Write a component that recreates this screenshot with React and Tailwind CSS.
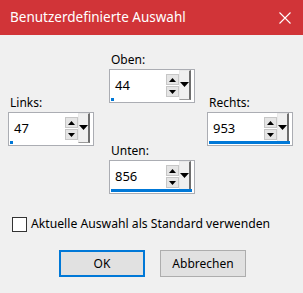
const font = { fontFamily: '"Noto Sans", "Open Sans", sans-serif' };

function Arrow({ down, big }) {
  const w = big ? 9 : 7;
  const h = big ? 5 : 4;
  return (
    <svg width={w} height={h} viewBox={`0 0 ${w} ${h}`}>
      {down ? (
        <path d={`M0 0h${w}L${w / 2} ${h}z`} fill="#000" />
      ) : (
        <path d={`M0 ${h}h${w}L${w / 2} 0z`} fill="#000" />
      )}
    </svg>
  );
}

function Spinner({ label, value, full }) {
  return (
    <div className="flex flex-col">
      <div className="h-[16px] leading-[16px] text-[12px] text-black pl-[2px]">{label}</div>
      <div className="mt-[1px] flex h-[34px] w-[86px] border border-[#abadb3] bg-white">
        <div className="relative flex flex-1 items-center pl-[5px] text-[13px] text-black">
          {value}
          <div
            className={
              full
                ? "absolute bottom-[1px] left-[1px] right-[-26px] h-[3px] bg-[#0078d7]"
                : "absolute bottom-[1px] left-[1px] h-[3px] w-[3px] bg-[#0078d7]"
            }
          />
        </div>
        <div className="flex flex-col gap-[0px] pt-[4px]">
          <div className="flex h-[11px] w-[13px] items-center justify-center border border-[#c7c7c7] bg-[#e5e5e5]">
            <Arrow />
          </div>
          <div className="mt-[1px] flex h-[11px] w-[13px] items-center justify-center border border-[#c7c7c7] bg-[#e5e5e5]">
            <Arrow down />
          </div>
        </div>
        <div className="mr-[3px] mb-[2px] flex w-[12px] items-start justify-center border-t border-l border-t-[#e8e8e8] border-l-[#e8e8e8] border-r-2 border-b border-r-[#6e6e6e] border-b-[#9a9a9a] bg-[#f0f0f0] pt-[11px]">
          <Arrow down big />
        </div>
      </div>
    </div>
  );
}

export default function App() {
  return (
    <div className="flex h-[293px] w-[303px] flex-col bg-[#f0f0f0]" style={font}>
      <div className="flex h-[35px] items-center justify-between bg-[#d13438] pl-[10px] pr-[12px] text-white">
        <span className="text-[13.5px]">Benutzerdefinierte Auswahl</span>
        <svg width="12" height="12" viewBox="0 0 12 12">
          <path d="M0.5 0.5l11 11M11.5 0.5l-11 11" stroke="#fff" strokeWidth="1.1" />
        </svg>
      </div>
      <div className="flex pl-[8px] pt-[17px]">
        <div className="w-[86px] pt-[43px]">
          <Spinner label="Links:" value="47" />
        </div>
        <div className="ml-[15px] flex flex-col gap-[40px]">
          <Spinner label="Oben:" value="44" />
          <Spinner label="Unten:" value="856" full />
        </div>
        <div className="ml-[12px] pt-[43px]">
          <Spinner label="Rechts:" value="953" full />
        </div>
      </div>
      <label className="mt-[21px] ml-[12px] flex items-center gap-[4px] text-[12.2px] text-black">
        <span className="h-[15px] w-[15px] border border-[#333] bg-white" />
        Aktuelle Auswahl als Standard verwenden
      </label>
      <div className="mt-[17px] flex gap-[15px] pl-[59px]">
        <button className="h-[27px] w-[86px] border-2 border-[#0078d7] bg-[#e1e1e1] text-[12px] text-black">OK</button>
        <button className="h-[27px] w-[86px] border border-[#adadad] bg-[#e1e1e1] text-[12px] text-black">Abbrechen</button>
      </div>
    </div>
  );
}
